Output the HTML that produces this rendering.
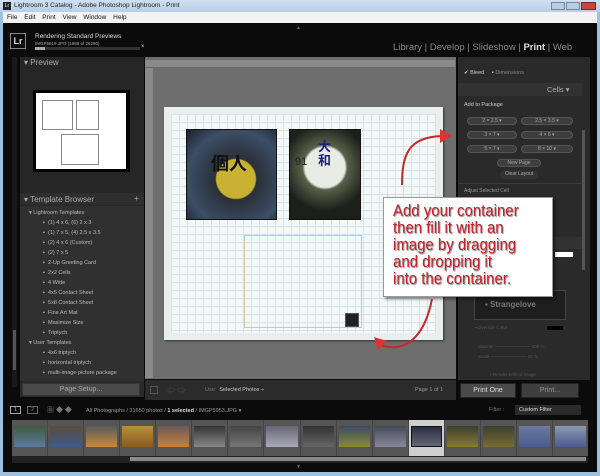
<!DOCTYPE html>
<html><head><meta charset="utf-8"><style>
*{margin:0;padding:0;box-sizing:border-box}
body{width:600px;height:476px;overflow:hidden;background:#9cc0de;font-family:"Liberation Sans","Noto Sans CJK JP",sans-serif;position:relative}
.a{position:absolute}
.t{font-size:6px;color:#ccc;white-space:nowrap}
.btn{position:absolute;height:8px;border-radius:4px;background:#3e3e3e;border:1px solid #555;font-size:5px;color:#aaa;text-align:center;line-height:7px}
</style></head><body>
<div class="a" style="left:0;top:0;width:600px;height:12px;background:linear-gradient(#cfe0f0,#b7cfe6)"></div>
<div class="a" style="left:3px;top:2px;width:8px;height:8px;background:#222;color:#fff;font-size:5px;line-height:8px;text-align:center">Lr</div>
<div class="a t" style="left:14px;top:2px;color:#222;font-size:6.5px">Lightroom 3 Catalog - Adobe Photoshop Lightroom - Print</div>
<div class="a" style="left:551px;top:2px;width:14px;height:8px;background:#b8cde2;border:1px solid #789"></div>
<div class="a" style="left:566px;top:2px;width:14px;height:8px;background:#b8cde2;border:1px solid #789"></div>
<div class="a" style="left:581px;top:2px;width:15px;height:8px;background:#c8463a;border:1px solid #822"></div>
<div class="a" style="left:3px;top:12px;width:594px;height:11px;background:#f3f3f3"></div>
<div class="a t" style="left:7px;top:14px;color:#111;font-size:6.5px;word-spacing:5px">File Edit Print View Window Help</div>
<div class="a" style="left:3px;top:23px;width:594px;height:449px;background:#0b0b0b"></div>
<div class="a" style="left:10px;top:33px;width:16px;height:16px;border:1px solid #888;color:#ddd;font-size:9px;line-height:14px;text-align:center;font-weight:bold">Lr</div>
<div class="a t" style="left:35px;top:33px;font-size:6.5px;color:#ddd">Rendering Standard Previews</div>
<div class="a t" style="left:35px;top:41px;font-size:4.5px;color:#aaa">IMGP5619.JPG (1989 of 26250)</div>
<div class="a" style="left:35px;top:47px;width:105px;height:3px;background:#333"></div>
<div class="a" style="left:35px;top:47px;width:10px;height:3px;background:#aaa"></div>
<div class="a t" style="left:141px;top:44px;color:#ccc;font-size:6px">×</div>
<div class="a t" style="left:393px;top:42px;font-size:9.5px;color:#888">Library&nbsp;|&nbsp;Develop&nbsp;|&nbsp;Slideshow&nbsp;|&nbsp;<b style="color:#ddd">Print</b>&nbsp;|&nbsp;Web</div>
<div class="a" style="left:20px;top:57px;width:124px;height:322px;background:#262626"></div>
<div class="a" style="left:12px;top:57px;width:5px;height:330px;background:#1a1a1a"></div>
<div class="a" style="left:13px;top:330px;width:3px;height:40px;background:#555"></div>
<div class="a t" style="left:24px;top:58px;font-size:8px;color:#aaa">▾ Preview</div>
<div class="a" style="left:33px;top:90px;width:97px;height:82px;background:#000"></div>
<div class="a" style="left:36px;top:93px;width:90px;height:76px;background:#fff"></div>
<div class="a" style="left:42px;top:100px;width:31px;height:30px;border:1px solid #888"></div>
<div class="a" style="left:76px;top:100px;width:23px;height:30px;border:1px solid #888"></div>
<div class="a" style="left:61px;top:134px;width:38px;height:31px;border:1px solid #888"></div>
<div class="a" style="left:20px;top:193px;width:124px;height:12px;background:#2e2e2e"></div>
<div class="a t" style="left:24px;top:195px;font-size:8px;color:#aaa">▾ Template Browser</div>
<div class="a t" style="left:134px;top:194px;font-size:8px;color:#aaa">+</div>
<div class="a" style="left:20px;top:206px;width:124px;height:175px;background:#303030"></div>
<div class="a" style="left:29px;top:208px;font-size:5.5px;color:#bbb;line-height:10px;white-space:nowrap">
<div>▾ Lightroom Templates</div>
<div style="padding-left:14px">▪&nbsp; (1) 4 x 6, (6) 2 x 3</div>
<div style="padding-left:14px">▪&nbsp; (1) 7 x 5, (4) 2.5 x 3.5</div>
<div style="padding-left:14px">▪&nbsp; (2) 4 x 6 (Custom)</div>
<div style="padding-left:14px">▪&nbsp; (2) 7 x 5</div>
<div style="padding-left:14px">▪&nbsp; 2-Up Greeting Card</div>
<div style="padding-left:14px">▪&nbsp; 2x2 Cells</div>
<div style="padding-left:14px">▪&nbsp; 4 Wide</div>
<div style="padding-left:14px">▪&nbsp; 4x5 Contact Sheet</div>
<div style="padding-left:14px">▪&nbsp; 5x8 Contact Sheet</div>
<div style="padding-left:14px">▪&nbsp; Fine Art Mat</div>
<div style="padding-left:14px">▪&nbsp; Maximize Size</div>
<div style="padding-left:14px">▪&nbsp; Triptych</div>
<div>▾ User Templates</div>
<div style="padding-left:14px">▪&nbsp; 4x6 triptych</div>
<div style="padding-left:14px">▪&nbsp; horizontal triptych</div>
<div style="padding-left:14px">▪&nbsp; multi-image picture package</div>
</div>
<div class="a" style="left:20px;top:381px;width:124px;height:16px;background:#2a2a2a"></div>
<div class="a" style="left:22px;top:383px;width:118px;height:13px;background:#4a4a4a;border:1px solid #333;font-size:7px;color:#aaa;text-align:center;line-height:11px">Page Setup...</div>
<div class="a" style="left:145px;top:57px;width:311px;height:322px;background:#6e6e6e"></div>
<div class="a" style="left:145px;top:60px;width:310px;height:8px;background:#8a8a8a;border-bottom:1px solid #666"></div>
<div class="a" style="left:145px;top:68px;width:8px;height:310px;background:#8a8a8a"></div>
<div class="a" style="left:164px;top:107px;width:279px;height:233px;background-color:#f2f7f8;background-image:linear-gradient(#d3e4ea 1px,transparent 1px),linear-gradient(90deg,#d3e4ea 1px,transparent 1px);background-size:8px 8px;box-shadow:1px 1px 2px #333;border:7px solid #e9eeef"></div>
<div class="a" style="left:186px;top:129px;width:91px;height:91px;background:radial-gradient(circle at 55% 55%,#c9b232 0 28%,#2b2f38 30%,#3b4e66 70%,#1a2230);border:1px solid #111"></div>
<div class="a" style="left:211px;top:150px;font-size:18px;font-weight:bold;color:#111">個人</div>
<div class="a" style="left:289px;top:129px;width:72px;height:91px;background:radial-gradient(circle at 50% 42%,#e8ece4 0 32%,#5a5f4a 36%,#1c1f1a 70%);border:1px solid #111"></div>
<div class="a" style="left:318px;top:140px;font-size:13px;font-weight:bold;color:#1a237a;line-height:14px">大<br>和</div>
<div class="a" style="left:295px;top:156px;font-size:11px;color:#222">91</div>
<div class="a" style="left:244px;top:235px;width:118px;height:93px;border:1px solid #d9c4a0"></div>
<div class="a" style="left:345px;top:313px;width:14px;height:14px;background:#222;border:1px solid #555"></div>
<svg class="a" style="left:360px;top:115px" width="100" height="240" viewBox="0 0 100 240">
<path d="M42 70 C42 40 48 22 82 21" stroke="#c42a2a" stroke-width="2" fill="none"/>
<path d="M80 14 L92 21 L80 28 Z" fill="#d33"/>
<path d="M72 184 C66 215 50 240 20 230" stroke="#c42a2a" stroke-width="2" fill="none"/>
<path d="M14 222 L18 235 L27 226 Z" fill="#d33"/>
</svg>
<div class="a" style="left:145px;top:380px;width:311px;height:20px;background:#2b2b2b"></div>
<div class="a" style="left:150px;top:386px;width:8px;height:8px;border:1px solid #555"></div>
<div class="a t" style="left:167px;top:385px;font-size:8px;color:#555">⇦ ⇨</div>
<div class="a t" style="left:205px;top:387px;font-size:5.5px;color:#777">Use:&nbsp; <span style="color:#ccc">Selected Photos ÷</span></div>
<div class="a t" style="left:415px;top:387px;font-size:5.5px;color:#999">Page 1 of 1</div>
<div class="a" style="left:458px;top:57px;width:132px;height:323px;background:#2a2a2a"></div>
<div class="a" style="left:582px;top:130px;width:3px;height:140px;background:#555"></div>
<div class="a t" style="left:464px;top:70px;font-size:5.5px;color:#ccc">✔ Bleed &nbsp;&nbsp;&nbsp;&nbsp;▪ <span style="color:#888">Dimensions</span></div>
<div class="a" style="left:458px;top:83px;width:124px;height:13px;background:#323232"></div>
<div class="a t" style="left:547px;top:85px;font-size:7.5px;color:#aaa">Cells ▾</div>
<div class="a t" style="left:464px;top:102px;font-size:5.5px;color:#ccc">Add to Package</div>
<div class="btn" style="left:467px;top:117px;width:50px">2 × 2.5 ▾</div>
<div class="btn" style="left:521px;top:117px;width:52px">2.5 × 3.5 ▾</div>
<div class="btn" style="left:467px;top:131px;width:50px">3 × 7 ▾</div>
<div class="btn" style="left:521px;top:131px;width:52px">4 × 6 ▾</div>
<div class="btn" style="left:467px;top:145px;width:50px">5 × 7 ▾</div>
<div class="btn" style="left:521px;top:145px;width:52px">8 × 10 ▾</div>
<div class="btn" style="left:497px;top:159px;width:44px">New Page</div>
<div class="btn" style="left:500px;top:171px;width:38px;border:none;background:#333">Clear Layout</div>
<div class="a" style="left:458px;top:183px;width:124px;height:1px;background:#3a3a3a"></div>
<div class="a t" style="left:464px;top:188px;font-size:5px;color:#999">Adjust Selected Cell</div>
<div class="a" style="left:458px;top:237px;width:124px;height:12px;background:#323232"></div>
<div class="a" style="left:555px;top:252px;width:18px;height:5px;background:#fff"></div>
<div class="a" style="left:474px;top:290px;width:92px;height:30px;background:#1e1e1e;border:1px solid #444"></div>
<div class="a t" style="left:485px;top:300px;font-size:8px;color:#777;font-weight:bold">▪ Strangelove</div>
<div class="a t" style="left:475px;top:325px;font-size:4.5px;color:#555">▪ Override Color</div>
<div class="a" style="left:547px;top:326px;width:16px;height:4px;background:#000"></div>
<div class="a t" style="left:478px;top:344px;font-size:4.5px;color:#555">Opacity ———————— 100 %</div>
<div class="a t" style="left:478px;top:354px;font-size:4.5px;color:#555">Scale ———————— 25 %</div>
<div class="a t" style="left:490px;top:372px;font-size:4.5px;color:#555">▪ Render behind image</div>
<div class="a" style="left:460px;top:383px;width:56px;height:15px;background:#4a4a4a;border:1px solid #222;font-size:7px;color:#ddd;text-align:center;line-height:13px">Print One</div>
<div class="a" style="left:521px;top:383px;width:58px;height:15px;background:#3e3e3e;border:1px solid #222;font-size:7px;color:#999;text-align:center;line-height:13px">Print...</div>
<div class="a" style="left:383px;top:197px;width:170px;height:100px;background:#fff;border:1px solid #999;box-shadow:2px 2px 3px rgba(0,0,0,.5)"></div>
<div class="a" style="left:393px;top:202px;font-size:17px;line-height:17px;color:#c8202a;white-space:nowrap;text-shadow:1px 1px 1px #888;transform:scaleX(0.88);transform-origin:0 0">Add your container<br>then fill it with an<br>image by dragging<br>and dropping it<br>into the container.</div>
<div class="a" style="left:10px;top:406px;width:11px;height:8px;border:1px solid #aaa;font-size:5px;color:#ccc;text-align:center;line-height:6px">1</div>
<div class="a" style="left:27px;top:406px;width:11px;height:8px;border:1px solid #666;font-size:5px;color:#888;text-align:center;line-height:6px">2</div>
<div class="a t" style="left:47px;top:405px;font-size:7px;color:#777">▦ ◆ ◆</div>
<div class="a t" style="left:86px;top:408px;font-size:5.5px;color:#999">All Photographs / 31650 photos / <b style="color:#ddd">1 selected</b> / IMGP5953.JPG ▾</div>
<div class="a t" style="left:489px;top:407px;font-size:5.5px;color:#777">Filter :</div>
<div class="a" style="left:515px;top:405px;width:66px;height:10px;background:#2a2a2a;font-size:5.5px;color:#ddd;line-height:10px;padding-left:4px">Custom Filter</div>
<div class="a" style="left:12px;top:420px;width:576px;height:36px;display:flex">
<div style="flex:1;background:#555;border-right:1px solid #444;padding:6px 2px"><div style="height:21px;background:linear-gradient(#3d5b3e,#5a7aa0)"></div></div>
<div style="flex:1;background:#555;border-right:1px solid #444;padding:6px 2px"><div style="height:21px;background:linear-gradient(#5a4a3a,#3c5c8a)"></div></div>
<div style="flex:1;background:#555;border-right:1px solid #444;padding:6px 2px"><div style="height:21px;background:linear-gradient(#5a5a5a,#c88a3a)"></div></div>
<div style="flex:1;background:#555;border-right:1px solid #444;padding:6px 2px"><div style="height:21px;background:linear-gradient(#b8903a,#8a5a20)"></div></div>
<div style="flex:1;background:#555;border-right:1px solid #444;padding:6px 2px"><div style="height:21px;background:linear-gradient(#6a5a5a,#c8803a)"></div></div>
<div style="flex:1;background:#555;border-right:1px solid #444;padding:6px 2px"><div style="height:21px;background:linear-gradient(#333,#888)"></div></div>
<div style="flex:1;background:#555;border-right:1px solid #444;padding:6px 2px"><div style="height:21px;background:linear-gradient(#444,#777)"></div></div>
<div style="flex:1;background:#555;border-right:1px solid #444;padding:6px 2px"><div style="height:21px;background:linear-gradient(#667,#aab)"></div></div>
<div style="flex:1;background:#555;border-right:1px solid #444;padding:6px 2px"><div style="height:21px;background:linear-gradient(#333,#666)"></div></div>
<div style="flex:1;background:#555;border-right:1px solid #444;padding:6px 2px"><div style="height:21px;background:linear-gradient(#3a4a6a,#8a8a30)"></div></div>
<div style="flex:1;background:#555;border-right:1px solid #444;padding:6px 2px"><div style="height:21px;background:linear-gradient(#444a5a,#889)"></div></div>
<div style="flex:1;background:#cfcfcf;border-right:1px solid #444;padding:6px 2px"><div style="height:21px;background:linear-gradient(#2a3040,#667);border:1px solid #111"></div></div>
<div style="flex:1;background:#555;border-right:1px solid #444;padding:6px 2px"><div style="height:21px;background:linear-gradient(#3a4030,#8a7a30)"></div></div>
<div style="flex:1;background:#555;border-right:1px solid #444;padding:6px 2px"><div style="height:21px;background:linear-gradient(#3a4030,#7a6a30)"></div></div>
<div style="flex:1;background:#555;border-right:1px solid #444;padding:6px 2px"><div style="height:21px;background:linear-gradient(#6a7aa0,#4a5a90)"></div></div>
<div style="flex:1;background:#555;padding:6px 2px"><div style="height:21px;background:linear-gradient(#8a9ab0,#4a5a90)"></div></div>
</div>
<div class="a" style="left:12px;top:456px;width:576px;height:7px;background:#222"></div>
<div class="a" style="left:130px;top:457px;width:456px;height:4px;background:#8a8a8a"></div>
<div class="a t" style="left:296px;top:464px;font-size:5px;color:#666">▼</div>
<div class="a t" style="left:296px;top:25px;font-size:5px;color:#666">▲</div>
</body></html>
